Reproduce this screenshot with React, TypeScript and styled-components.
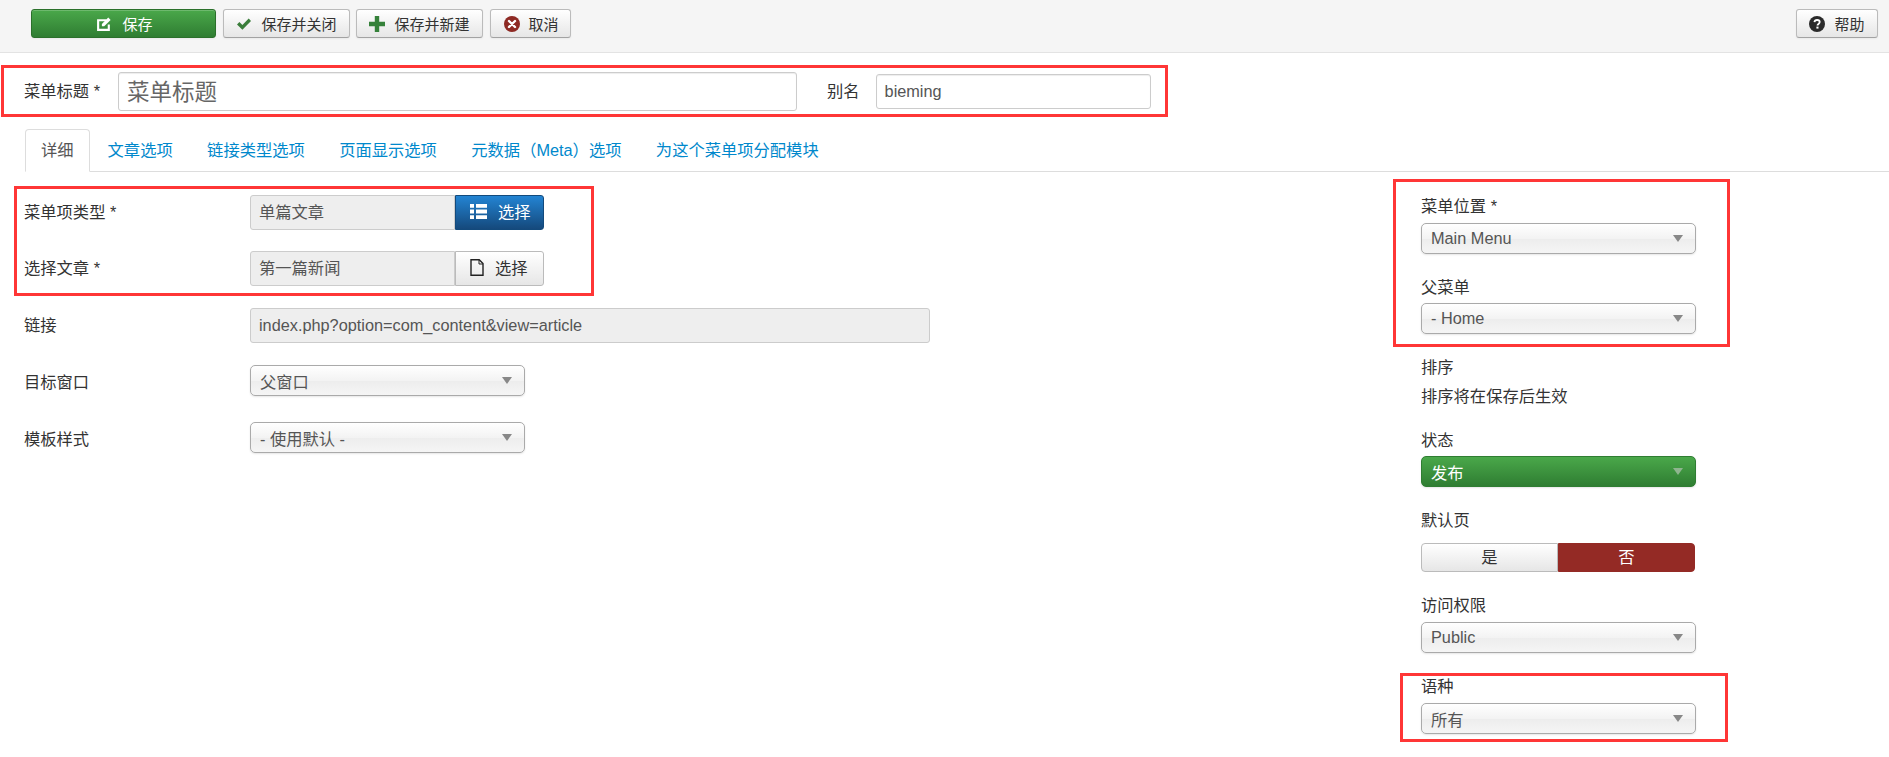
import React from "react";
import styled, { createGlobalStyle } from "styled-components";

const Global = createGlobalStyle`
  html, body { margin: 0; padding: 0; background: #fff; }
  body { font-family: "Liberation Sans", "Noto Sans CJK SC", sans-serif; font-size: 16.3px; color: #333; }
`;

const Page = styled.div`
  width: 1889px;
  height: 757px;
  overflow: hidden;
`;

const Toolbar = styled.div`
  display: flex;
  height: 53px;
  box-sizing: border-box;
  padding: 9px 11px 0 31px;
  background: #f5f5f5;
  border-bottom: 1px solid #e3e3e3;
`;

const ToolButton = styled.button<{ $w: number; $ml?: number; $right?: boolean }>`
  display: flex;
  align-items: center;
  justify-content: center;
  gap: 9px;
  box-sizing: border-box;
  width: ${(p) => p.$w}px;
  height: 29px;
  margin-left: ${(p) => (p.$right ? "auto" : `${p.$ml ?? 0}px`)};
  padding: 0;
  font: 15px "Liberation Sans", "Noto Sans CJK SC", sans-serif;
  color: #333;
  background: linear-gradient(#fff, #e6e6e6);
  border: 1px solid #bbb;
  border-bottom-color: #a2a2a2;
  border-radius: 3px;
  box-shadow: inset 0 1px 0 rgba(255, 255, 255, 0.2), 0 1px 2px rgba(0, 0, 0, 0.05);
`;

const SaveButton = styled(ToolButton)`
  color: #fff;
  background: linear-gradient(#4aa84a, #2f7d32);
  border-color: #2b702b;
  gap: 10px;
  padding-left: 2px;
`;

const CancelButton = styled(ToolButton)`
  gap: 8px;
  padding-left: 2px;
`;

const Icon = styled.svg`
  display: block;
  flex: none;
`;

const TitleFrame = styled.div`
  display: flex;
  align-items: center;
  box-sizing: border-box;
  width: 1167px;
  height: 52px;
  margin: 12px 0 0 1px;
  padding-left: 20px;
  border: 3px solid #ff3636;
`;

const TitleLabel = styled.label`
  width: 94px;
  flex: none;
  line-height: 20px;
`;

const TextInput = styled.div<{ $w: number; $h: number; $size: number; $ml?: number }>`
  display: flex;
  align-items: center;
  box-sizing: border-box;
  width: ${(p) => p.$w}px;
  height: ${(p) => p.$h}px;
  margin-left: ${(p) => p.$ml ?? 0}px;
  padding-left: 8px;
  font-size: ${(p) => p.$size}px;
  color: #555;
  background: #fff;
  border: 1px solid #ccc;
  border-radius: 3px;
  box-shadow: inset 0 1px 1px rgba(0, 0, 0, 0.075);
`;

const TitleValue = styled(TextInput)`
  color: #666;
  padding-bottom: 2px;
`;

const AliasLabel = styled.label`
  flex: none;
  margin-left: 30px;
  line-height: 20px;
`;

const Tabs = styled.nav`
  display: flex;
  height: 43px;
  box-sizing: border-box;
  margin: 12px 0 0 25px;
  border-bottom: 1px solid #ddd;
`;

const Tab = styled.a<{ $active?: boolean }>`
  box-sizing: border-box;
  height: ${(p) => (p.$active ? 43 : 42)}px;
  padding: 0 15px;
  margin-right: ${(p) => (p.$active ? 2 : 2.4)}px;
  line-height: 41px;
  color: ${(p) => (p.$active ? "#555" : "#08c")};
  background: #fff;
  border: ${(p) => (p.$active ? "1px solid #ddd" : "1px solid transparent")};
  border-bottom: ${(p) => (p.$active ? "1px solid #fff" : "none")};
  border-radius: 4px 4px 0 0;
`;

const Main = styled.div`
  display: flex;
  margin-top: 7px;
`;

const LeftColumn = styled.div`
  flex: 0 0 1393px;
  box-sizing: border-box;
  padding: 7px 0 0 14px;
`;

const LeftFrame = styled.div`
  box-sizing: border-box;
  width: 580px;
  height: 110px;
  margin-bottom: 12px;
  padding: 6px 7px;
  border: 3px solid #ff3636;
`;

const FieldRow = styled.div<{ $last?: boolean; $gap?: number }>`
  display: flex;
  align-items: center;
  margin-bottom: ${(p) => (p.$last ? 0 : p.$gap ?? 21)}px;
`;

const PlainRows = styled.div`
  padding-left: 10px;
`;

const RowLabel = styled.label<{ $low?: boolean }>`
  flex: 0 0 226px;
  box-sizing: border-box;
  padding: ${(p) => (p.$low ? "3px 0 0" : "0 0 2px")};
  line-height: 20px;
`;

const ReadOnly = styled.div<{ $w: number; $joined?: boolean }>`
  box-sizing: border-box;
  width: ${(p) => p.$w}px;
  height: 35px;
  padding-left: 8px;
  line-height: 33px;
  color: #555;
  background: #eee;
  border: 1px solid #ccc;
  border-radius: ${(p) => (p.$joined ? "3px 0 0 3px" : "3px")};
`;

const PickButton = styled.div<{ $primary?: boolean }>`
  display: flex;
  align-items: center;
  gap: 11px;
  box-sizing: border-box;
  width: 89px;
  height: 35px;
  padding: 0 0 3px 14px;
  color: ${(p) => (p.$primary ? "#fff" : "#333")};
  background: ${(p) => (p.$primary ? "linear-gradient(#2384d3, #15497c)" : "linear-gradient(#fff, #e6e6e6)")};
  border: 1px solid ${(p) => (p.$primary ? "#134a7c" : "#bbb")};
  border-radius: 0 3px 3px 0;
`;

const Select = styled.div<{ $w: number; $tone?: "green" }>`
  display: flex;
  align-items: center;
  justify-content: space-between;
  box-sizing: border-box;
  width: ${(p) => p.$w}px;
  height: 31px;
  padding: 0 12px 0 9px;
  color: ${(p) => (p.$tone ? "#fff" : "#555")};
  background: ${(p) =>
    p.$tone
      ? "linear-gradient(#4aa84a, #2f7d32)"
      : "linear-gradient(#fff 0%, #f3f3f3 50%, #ededed 52%, #f5f5f5 100%)"};
  border: 1px solid ${(p) => (p.$tone ? "#2f7d32" : "#aaa")};
  border-radius: 5px;
  box-shadow: 0 1px 2px rgba(0, 0, 0, 0.1);
`;

const Caret = styled.span<{ $muted?: boolean }>`
  width: 0;
  height: 0;
  border-left: 5px solid transparent;
  border-right: 5px solid transparent;
  border-top: 7px solid ${(p) => (p.$muted ? "#8fb58f" : "#888")};
`;

const RightColumn = styled.aside`
  flex: 0 0 auto;
  display: flex;
  flex-direction: column;
`;

const RightFrame = styled.div`
  box-sizing: border-box;
  width: 337px;
  height: 168px;
  padding: 14px 0 0 25px;
  border: 3px solid #ff3636;
`;

const Fields = styled.div`
  padding: 10px 0 0 28px;
`;

const FieldLabel = styled.label<{ $gap: number; $mt?: number }>`
  display: block;
  line-height: 20px;
  margin-top: ${(p) => p.$mt ?? 0}px;
  margin-bottom: ${(p) => p.$gap}px;
`;

const Note = styled.div`
  line-height: 20px;
`;

const Toggle = styled.div`
  display: flex;
  width: 274px;
  height: 29px;
`;

const ToggleOption = styled.div<{ $on?: boolean }>`
  flex: 0 0 137px;
  box-sizing: border-box;
  line-height: 27px;
  text-align: center;
  color: ${(p) => (p.$on ? "#fff" : "#333")};
  background: ${(p) => (p.$on ? "#942a25" : "linear-gradient(#fff, #e6e6e6)")};
  border: 1px solid ${(p) => (p.$on ? "#942a25" : "#bbb")};
  border-radius: ${(p) => (p.$on ? "0 4px 4px 0" : "4px 0 0 4px")};
`;

const LanguageFrame = styled.div`
  box-sizing: border-box;
  width: 328px;
  height: 69px;
  margin: 20px 0 0 7px;
  padding: 0 0 0 18px;
  border: 3px solid #ff3636;
`;

const EditIcon = () => (
  <Icon width="16" height="16" viewBox="0 0 15 15">
    <path d="M1 3h9v2H3v7h8V8h2v6H1z" fill="#fff" />
    <path d="M5.5 7.5 11.5 1.5l2.2 2.2-6 6H5.5z" fill="#fff" />
  </Icon>
);
const CheckIcon = () => (
  <Icon width="16" height="14" viewBox="0 0 16 14">
    <path d="M1 7.5 3.4 5l3 3L12.7 1.5 15 4 6.4 12.8z" fill="#3a7d3a" />
  </Icon>
);
const PlusIcon = () => (
  <Icon width="16" height="16" viewBox="0 0 16 16">
    <path d="M5.8 0h4.4v5.8H16v4.4h-5.8V16H5.8v-5.8H0V5.8h5.8z" fill="#35813a" />
  </Icon>
);
const CancelIcon = () => (
  <Icon width="16" height="16" viewBox="0 0 16 16">
    <circle cx="8" cy="8" r="8" fill="#8e2a24" />
    <path d="M5 5l6 6M11 5l-6 6" stroke="#fff" strokeWidth="2.4" strokeLinecap="round" />
  </Icon>
);
const HelpIcon = () => (
  <Icon width="16" height="16" viewBox="0 0 16 16">
    <circle cx="8" cy="8" r="8" fill="#2b2b2b" />
    <path d="M5.4 6.2C5.6 4.7 6.6 4 8.1 4c1.5 0 2.6.8 2.6 2.1 0 1.9-2.2 1.8-2.2 3.4" fill="none" stroke="#fff" strokeWidth="1.8" />
    <rect x="7.4" y="10.6" width="2.1" height="2" fill="#fff" />
  </Icon>
);
const ListIcon = () => (
  <Icon width="17" height="15" viewBox="0 0 17 15">
    <path d="M0 0h4v3.8H0zM6 0h11v3.8H6zM0 5.6h4v3.8H0zM6 5.6h11v3.8H6zM0 11.2h4V15H0zM6 11.2h11V15H6z" fill="#fff" />
  </Icon>
);
const FileIcon = () => (
  <Icon width="14" height="17" viewBox="0 0 14 17">
    <path d="M1 .75h8.2L13 4.6V16.25H1z" fill="none" stroke="#222" strokeWidth="1.4" />
    <path d="M9 1v4h4" fill="none" stroke="#222" strokeWidth="1" />
  </Icon>
);

const tabs = ["文章选项", "链接类型选项", "页面显示选项", "元数据（Meta）选项", "为这个菜单项分配模块"];

export default function App() {
  return (
    <Page>
      <Global />
      <Toolbar>
        <SaveButton $w={185}><EditIcon />保存</SaveButton>
        <ToolButton $w={127} $ml={7}><CheckIcon />保存并关闭</ToolButton>
        <ToolButton $w={127} $ml={6}><PlusIcon />保存并新建</ToolButton>
        <CancelButton $w={81} $ml={7}><CancelIcon />取消</CancelButton>
        <ToolButton $w={82} $right><HelpIcon />帮助</ToolButton>
      </Toolbar>

      <TitleFrame>
        <TitleLabel>菜单标题 *</TitleLabel>
        <TitleValue $w={679} $h={39} $size={22.5}>菜单标题</TitleValue>
        <AliasLabel>别名</AliasLabel>
        <TextInput $w={275} $h={35} $size={16.3} $ml={16}>bieming</TextInput>
      </TitleFrame>

      <Tabs>
        <Tab $active>详细</Tab>
        {tabs.map((t) => (
          <Tab key={t}>{t}</Tab>
        ))}
      </Tabs>

      <Main>
        <LeftColumn>
          <LeftFrame>
            <FieldRow>
              <RowLabel>菜单项类型 *</RowLabel>
              <ReadOnly $w={205} $joined>单篇文章</ReadOnly>
              <PickButton $primary><ListIcon />选择</PickButton>
            </FieldRow>
            <FieldRow $last>
              <RowLabel>选择文章 *</RowLabel>
              <ReadOnly $w={205} $joined>第一篇新闻</ReadOnly>
              <PickButton><FileIcon />选择</PickButton>
            </FieldRow>
          </LeftFrame>
          <PlainRows>
            <FieldRow $gap={22}>
              <RowLabel>链接</RowLabel>
              <ReadOnly $w={680}>index.php?option=com_content&amp;view=article</ReadOnly>
            </FieldRow>
            <FieldRow $gap={26}>
              <RowLabel $low>目标窗口</RowLabel>
              <Select $w={275}>父窗口<Caret /></Select>
            </FieldRow>
            <FieldRow $last>
              <RowLabel $low>模板样式</RowLabel>
              <Select $w={275}>- 使用默认 -<Caret /></Select>
            </FieldRow>
          </PlainRows>
        </LeftColumn>

        <RightColumn>
          <RightFrame>
            <FieldLabel $gap={7}>菜单位置 *</FieldLabel>
            <Select $w={275}>Main Menu<Caret /></Select>
            <FieldLabel $gap={6} $mt={23}>父菜单</FieldLabel>
            <Select $w={275}>- Home<Caret /></Select>
          </RightFrame>
          <Fields>
            <FieldLabel $gap={9}>排序</FieldLabel>
            <Note>排序将在保存后生效</Note>
            <FieldLabel $gap={6} $mt={24}>状态</FieldLabel>
            <Select $w={275} $tone="green">发布<Caret $muted /></Select>
            <FieldLabel $gap={13} $mt={23}>默认页</FieldLabel>
            <Toggle>
              <ToggleOption>是</ToggleOption>
              <ToggleOption $on>否</ToggleOption>
            </Toggle>
            <FieldLabel $gap={7} $mt={23}>访问权限</FieldLabel>
            <Select $w={275}>Public<Caret /></Select>
          </Fields>
          <LanguageFrame>
            <FieldLabel $gap={7}>语种</FieldLabel>
            <Select $w={275}>所有<Caret /></Select>
          </LanguageFrame>
        </RightColumn>
      </Main>
    </Page>
  );
}
